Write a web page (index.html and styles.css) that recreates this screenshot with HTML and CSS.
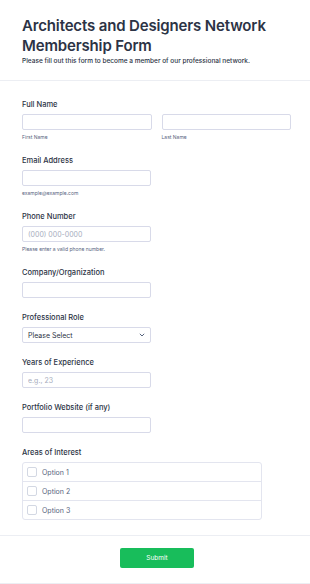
FILE: index.html
```html
<!DOCTYPE html>
<html lang="en">
<head>
<meta charset="UTF-8">
<meta name="viewport" content="width=device-width, initial-scale=1.0">
<title>Architects and Designers Network Membership Form</title>
<link rel="stylesheet" href="styles.css">
</head>
<body>

<header class="form-header">
  <h1>Architects and Designers Network Membership Form</h1>
  <p>Please fill out this form to become a member of our professional network.</p>
</header>

<form class="form-body">
  <!-- name -->
  <div class="field">
    <label class="field-label">Full Name</label>
    <div class="name-row">
      <div class="name-col">
        <input type="text" class="input">
        <span class="sublabel">First Name</span>
      </div>
      <div class="name-col">
        <input type="text" class="input">
        <span class="sublabel">Last Name</span>
      </div>
    </div>
  </div>

  <div class="field">
    <label class="field-label">Email Address</label>
    <input type="email" class="input half">
    <span class="sublabel">example@example.com</span>
  </div>

  <div class="field">
    <label class="field-label">Phone Number</label>
    <input type="tel" class="input half" placeholder="(000) 000-0000">
    <span class="sublabel">Please enter a valid phone number.</span>
  </div>

  <div class="field">
    <label class="field-label">Company/Organization</label>
    <input type="text" class="input half">
  </div>

  <div class="field">
    <label class="field-label">Professional Role</label>
    <div class="select half">
      <span>Please Select</span>
      <svg width="6" height="4" viewBox="0 0 6 4"><path d="M0.8 0.8 L3 3 L5.2 0.8" fill="none" stroke="#57647e" stroke-width="1"/></svg>
    </div>
  </div>

  <div class="field">
    <label class="field-label">Years of Experience</label>
    <input type="text" class="input half" placeholder="e.g., 23">
  </div>

  <div class="field">
    <label class="field-label">Portfolio Website (if any)</label>
    <input type="text" class="input half">
  </div>

  <div class="field">
    <label class="field-label">Areas of Interest</label>
    <div class="checks">
      <label class="check-row"><span class="box"></span>Option 1</label>
      <label class="check-row"><span class="box"></span>Option 2</label>
      <label class="check-row"><span class="box"></span>Option 3</label>
    </div>
  </div>
</form>

<div class="form-footer">
  <button type="button" class="submit-btn">Submit</button>
</div>

</body>
</html>
```

FILE: styles.css
```css
body {
  font-family: Inter, "Liberation Sans", Arial, sans-serif;
  margin: 0;
  padding: 0;
  color: #2c3345;
  background: #fff;
}

.form-header {
  padding: 16px 22px 14px;
  border-bottom: 1px solid #eceef3;
}

.form-header h1 {
  font-size: 15px;
  line-height: 20px;
  font-weight: 600;
  margin: 0;
  letter-spacing: -0.15px;
}

.form-header p {
  font-size: 6.5px;
  line-height: 10px;
  margin: 0;
  font-weight: 500;
}

.form-body {
  padding: 19px 19px 0 22px;
}

.field {
  margin-bottom: 15px;
  display: flex;
  flex-direction: column;
}

.field-label {
  font-size: 7.5px;
  line-height: 10px;
  font-weight: 450;
  margin-bottom: 4px;
}

.name-row {
  display: flex;
  gap: 10px;
}

.name-col {
  flex: 1;
  display: flex;
  flex-direction: column;
}

.input {
  box-sizing: border-box;
  height: 16px;
  border: 1px solid #d8dae9;
  border-radius: 2px;
  padding: 0 5px;
  font-family: inherit;
  font-size: 7px;
  color: #2c3345;
  background: #fff;
  margin: 0;
}

.input::placeholder {
  color: #a7adbd;
}

.half {
  width: 129px;
}

.sublabel {
  font-size: 5px;
  line-height: 8px;
  margin-top: 3px;
  color: #57647e;
}

.select {
  box-sizing: border-box;
  height: 16px;
  border: 1px solid #d8dae9;
  border-radius: 2px;
  padding: 0 5px;
  display: flex;
  align-items: center;
  justify-content: space-between;
  font-size: 7px;
}

.checks {
  width: 238px;
  border: 1px solid #e3e5ef;
  border-radius: 3px;
}

.check-row {
  display: flex;
  align-items: center;
  gap: 5px;
  height: 18px;
  padding: 0 4px;
  font-size: 7px;
  color: #57647e;
  border-bottom: 1px solid #e3e5ef;
}

.check-row:last-child {
  border-bottom: none;
}

.box {
  width: 8px;
  height: 8px;
  border: 1px solid #d3d8e3;
  border-radius: 2px;
}

.form-footer {
  border-top: 1px solid #eceef3;
  border-bottom: 1px solid #eceef3;
  margin-top: 0;
  padding: 12px 0 15px 4px;
  display: flex;
  justify-content: center;
}

.submit-btn {
  width: 74px;
  height: 20px;
  border: none;
  border-radius: 2px;
  background: #18bd5b;
  color: #fff;
  font-family: inherit;
  font-size: 6.5px;
  font-weight: 400;
}
```
